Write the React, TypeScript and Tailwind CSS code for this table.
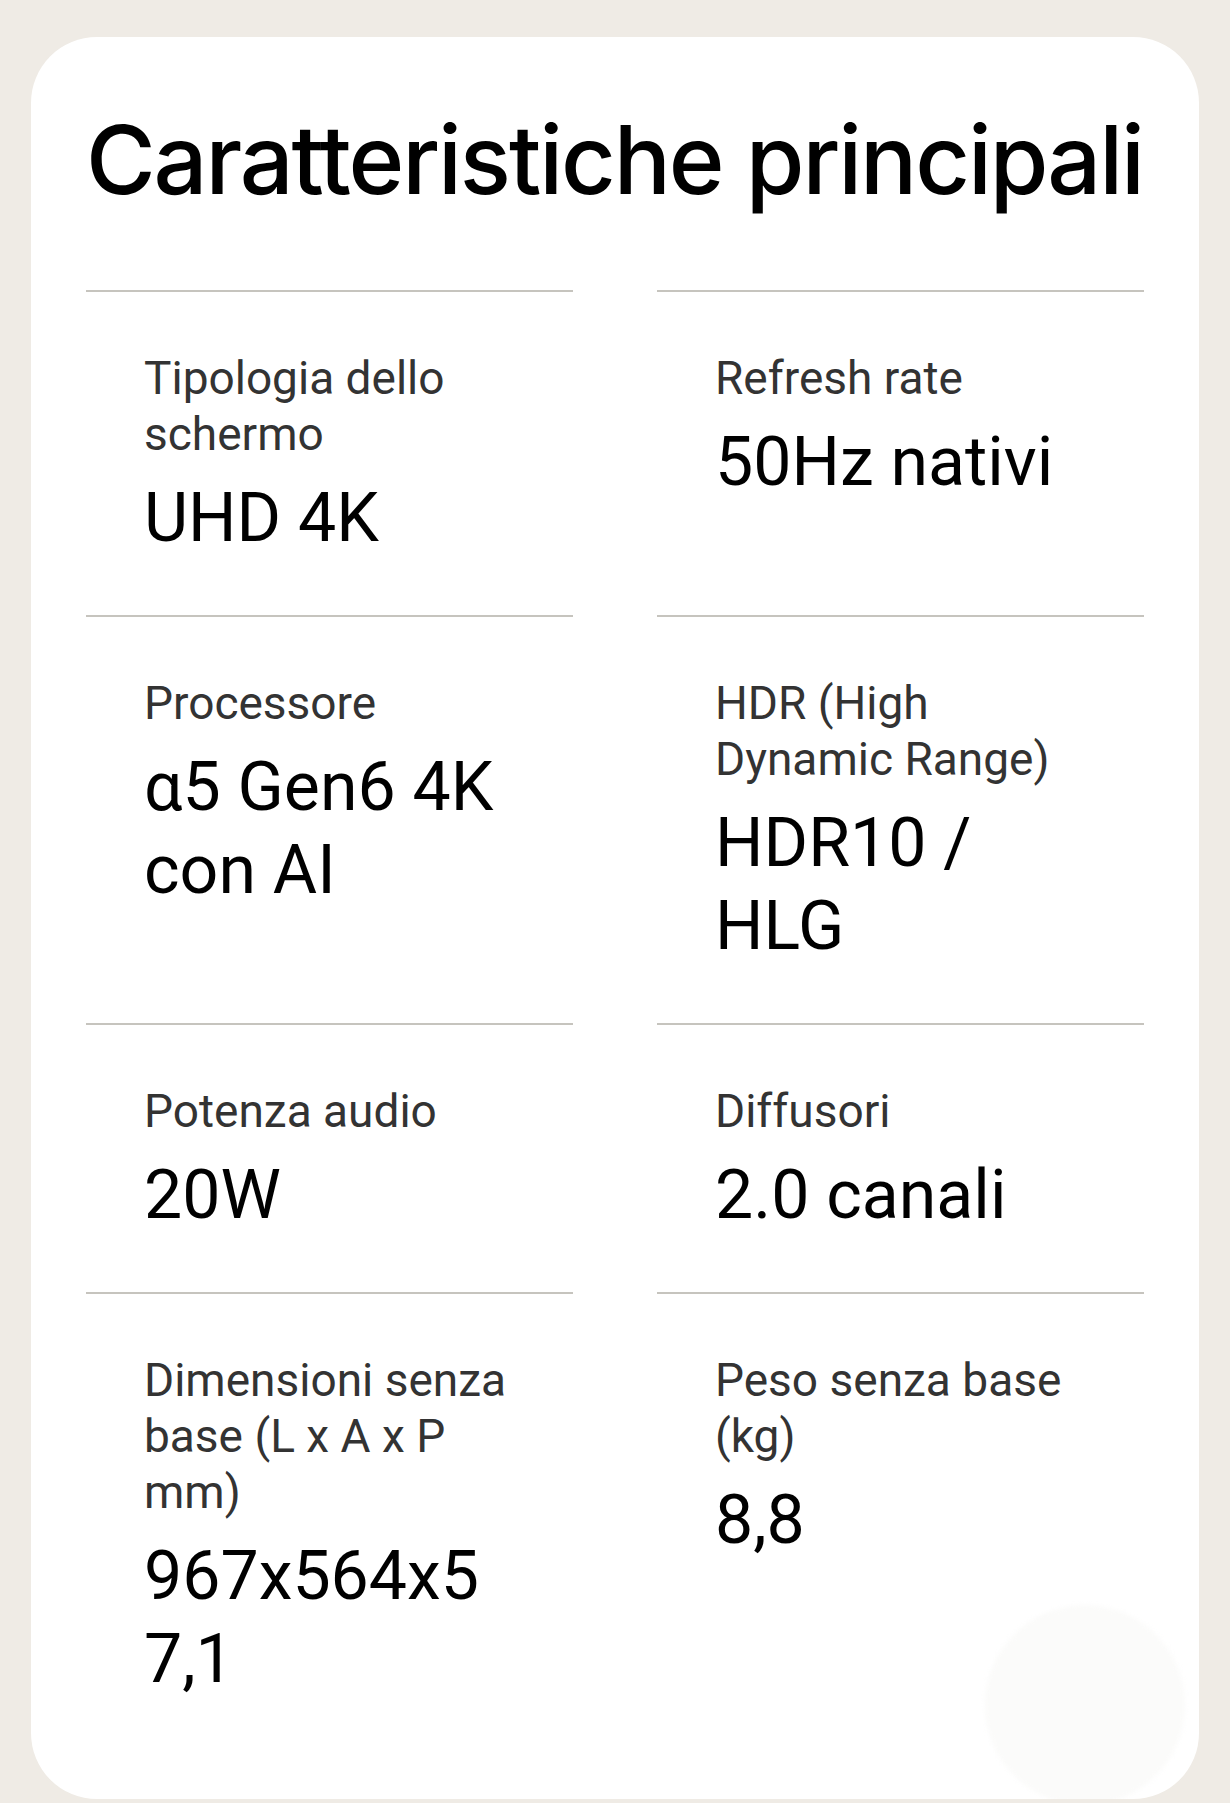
const specs = [
    { label: 'Tipologia dello schermo', value: 'UHD 4K' },
    { label: 'Refresh rate', value: '50Hz nativi' },
    { label: 'Processore', value: 'α5 Gen6 4K con AI' },
    { label: 'HDR (High Dynamic Range)', value: 'HDR10 / HLG' },
    { label: 'Potenza audio', value: '20W' },
    { label: 'Diffusori', value: '2.0 canali' },
    { label: 'Dimensioni senza base (L x A x P mm)', value: '967x564x57,1' },
    { label: 'Peso senza base (kg)', value: '8,8' },
]

export default function App() {
    return (
        <div className="min-h-screen bg-[#efebe5] px-[31px] pt-[37px] pb-[3px]">
            <section className="relative overflow-hidden rounded-[66px] bg-white px-[55px] pt-[75px] pb-[43px]">
                <h2 className="mb-[83px] font-['Inter',sans-serif] text-[95px] font-medium leading-[95px] tracking-[-0.022em] text-black">
                    Caratteristiche principali
                </h2>

                <div className="grid grid-cols-2 gap-x-[84px]">
                    {specs.map((spec) => (
                        <div
                            key={spec.label}
                            className="border-t-2 border-[#c6c4be] px-[58px] pt-[58px] pb-[55px] font-['Roboto',sans-serif]"
                        >
                            <p className="text-[46px] leading-[56px] text-[#333333]">{spec.label}</p>
                            <p className="mt-[15px] break-words text-[68px] font-normal leading-[83px] text-black">
                                {spec.value}
                            </p>
                        </div>
                    ))}
                </div>

                {/* faint floating button ghost */}
                <div className="pointer-events-none absolute right-[14px] bottom-[-6px] h-[200px] w-[200px] rounded-full bg-[#fbfbfa] blur-[2px]" />
            </section>
        </div>
    )
}
